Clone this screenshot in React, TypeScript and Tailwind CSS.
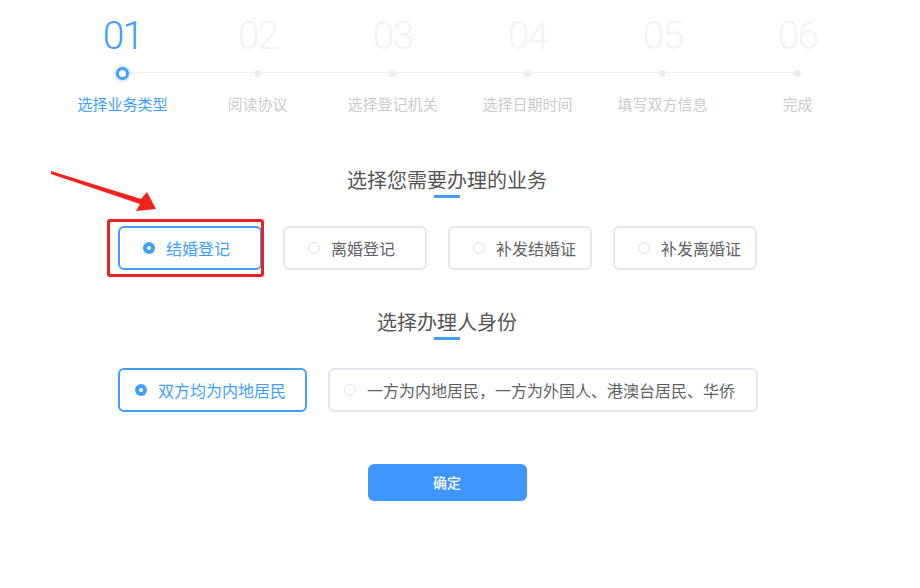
import { useState } from 'react';

const STEPS = [
  { no: '01', label: '选择业务类型' },
  { no: '02', label: '阅读协议' },
  { no: '03', label: '选择登记机关' },
  { no: '04', label: '选择日期时间' },
  { no: '05', label: '填写双方信息' },
  { no: '06', label: '完成' },
];

const BUSINESS = ['结婚登记', '离婚登记', '补发结婚证', '补发离婚证'];
const IDENTITY = ['双方均为内地居民', '一方为内地居民，一方为外国人、港澳台居民、华侨'];

function Radio({ checked }: { checked: boolean }) {
  return checked ? (
    <span className="flex h-[12px] w-[12px] items-center justify-center rounded-full bg-[#409eff]">
      <span className="h-[4px] w-[4px] rounded-full bg-white" />
    </span>
  ) : (
    <span className="h-[12px] w-[12px] rounded-full border border-[#dcdfe6] bg-white" />
  );
}

function Option({
  text,
  checked,
  onClick,
  className,
}: {
  text: string;
  checked: boolean;
  onClick: () => void;
  className: string;
}) {
  return (
    <button
      onClick={onClick}
      className={`flex h-[44px] items-center rounded-[6px] border-2 text-[16px] ${
        checked ? 'border-[#409eff] text-[#409eff]' : 'border-[#e4e6eb] text-[#606266]'
      } ${className}`}
    >
      <Radio checked={checked} />
      <span className="ml-[11px] whitespace-nowrap">{text}</span>
    </button>
  );
}

function Title({ text }: { text: string }) {
  return (
    <div className="flex flex-col items-center">
      <div className="text-[20px] leading-[28px] text-[#555]">{text}</div>
      <div className="mt-[1px] h-[3px] w-[26px] bg-[#409eff]" />
    </div>
  );
}

export default function App() {
  const [biz, setBiz] = useState(0);
  const [who, setWho] = useState(0);

  return (
    <div
      className="relative h-[588px] w-[920px] overflow-hidden bg-white"
      style={{ fontFamily: '"Noto Sans CJK SC", "Noto Sans", sans-serif' }}
    >
      {/* steps */}
      <div className="ml-[55px] w-[810px] pt-[16px]">
        <div className="grid grid-cols-6">
          {STEPS.map((s, i) => (
            <div
              key={s.no}
              className={`text-center text-[39px] leading-[40px] font-light tracking-[-2px] ${
                i === 0 ? 'text-[#409eff]' : 'text-[#f3f3f3]'
              }`}
              style={{ fontFamily: 'Roboto, sans-serif' }}
            >
              {s.no}
            </div>
          ))}
        </div>
        <div className="relative mt-[10px] grid h-[14px] grid-cols-6">
          <div className="absolute left-[67px] right-[67px] top-[6px] h-px bg-[#f0f0f0]" />
          {STEPS.map((s, i) => (
            <div key={s.no} className="relative flex items-center justify-center">
              {i === 0 ? (
                <span className="h-[13px] w-[13px] rounded-full border-[3px] border-[#409eff] bg-white shadow-[0_0_4px_rgba(64,158,255,0.6)]" />
              ) : (
                <span className="h-[7px] w-[7px] rounded-full bg-[#ececec]" />
              )}
            </div>
          ))}
        </div>
        <div className="mt-[14px] grid grid-cols-6">
          {STEPS.map((s, i) => (
            <div
              key={s.no}
              className={`text-center text-[15px] leading-[20px] ${
                i === 0 ? 'text-[#409eff]' : 'text-[#cacbcd]'
              }`}
            >
              {s.label}
            </div>
          ))}
        </div>
      </div>

      {/* form */}
      <div className="ml-[118px] w-[658px]">
        <div className="mt-[52px]">
          <Title text="选择您需要办理的业务" />
        </div>
        <div className="mt-[28px] flex gap-[21px]">
          {BUSINESS.map((b, i) => (
            <Option
              key={b}
              text={b}
              checked={biz === i}
              onClick={() => setBiz(i)}
              className="w-[144px] pl-[23px]"
            />
          ))}
        </div>

        <div className="mt-[38px]">
          <Title text="选择办理人身份" />
        </div>
        <div className="mt-[28px] flex gap-[21px]">
          <Option
            text={IDENTITY[0]}
            checked={who === 0}
            onClick={() => setWho(0)}
            className="w-[189px] pl-[15px]"
          />
          <Option
            text={IDENTITY[1]}
            checked={who === 1}
            onClick={() => setWho(1)}
            className="w-[430px] pl-[14px]"
          />
        </div>

        <div className="mt-[52px] flex justify-center">
          <button className="h-[37px] w-[159px] rounded-[6px] bg-[#4096ff] text-[14px] font-medium text-white">
            确定
          </button>
        </div>
      </div>

      {/* annotation */}
      <div className="absolute left-[107px] top-[219px] h-[58px] w-[157px] rounded-[3px] border-[3px] border-[#e8231f]" />
      <svg className="absolute left-0 top-0" width="200" height="230" viewBox="0 0 200 230">
        <polygon
          points="51,171 141,199 147,192 156,209 136,211 140,204 51,174"
          fill="#f0231c"
        />
      </svg>
    </div>
  );
}
